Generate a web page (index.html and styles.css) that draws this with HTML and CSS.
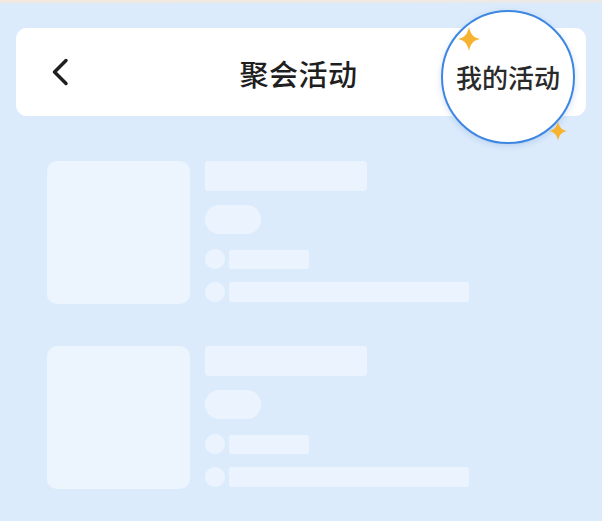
FILE: index.html
```html
<!DOCTYPE html>
<html lang="zh">
<head>
<meta charset="utf-8">
<link rel="stylesheet" href="styles.css">
</head>
<body>
<div class="page">
  <div class="topline"></div>
  <header class="navbar">
    <div class="back">
      <svg width="18" height="28" viewBox="0 0 18 28"><path d="M15 2.5 L3.5 14 L15 25.5" fill="none" stroke="#1f1f1f" stroke-width="3.5" stroke-linecap="round" stroke-linejoin="round"/></svg>
    </div>
    <h1 class="title">聚会活动</h1>
    <div class="spacer"></div>
  </header>
  <div class="mine">
    <span class="mine-text">我的活动</span>
    <svg class="spark spark-a" width="22" height="24" viewBox="0 0 22 24"><path d="M11 0 C12.5 7 15 10.5 22 12 C15 13.5 12.5 17 11 24 C9.5 17 7 13.5 0 12 C7 10.5 9.5 7 11 0 Z" fill="#f7b230"/></svg>
    <svg class="spark spark-b" width="18" height="20" viewBox="0 0 22 24"><path d="M11 0 C12.5 7 15 10.5 22 12 C15 13.5 12.5 17 11 24 C9.5 17 7 13.5 0 12 C7 10.5 9.5 7 11 0 Z" fill="#f7b230"/></svg>
  </div>
  <main class="list">
    <div class="item">
      <div class="thumb"></div>
      <div class="info">
        <div class="sk sk-title"></div>
        <div class="sk sk-pill"></div>
        <div class="row"><div class="sk sk-dot"></div><div class="sk sk-short"></div></div>
        <div class="row"><div class="sk sk-dot"></div><div class="sk sk-long"></div></div>
      </div>
    </div>
    <div class="item">
      <div class="thumb"></div>
      <div class="info">
        <div class="sk sk-title"></div>
        <div class="sk sk-pill"></div>
        <div class="row"><div class="sk sk-dot"></div><div class="sk sk-short"></div></div>
        <div class="row"><div class="sk sk-dot"></div><div class="sk sk-long"></div></div>
      </div>
    </div>
  </main>
</div>
</body>
</html>
```
FILE: styles.css
```css
* { box-sizing: border-box; margin: 0; padding: 0; }
html, body { width: 602px; height: 521px; overflow: hidden; }
body {
  background: #dcebfc;
  font-family: "Noto Sans CJK SC", "Noto Sans", sans-serif;
}
.page {
  position: relative;
  width: 602px;
  height: 521px;
  background: #dcebfc;
  display: flex;
  flex-direction: column;
}
.topline {
  height: 3px;
  background: linear-gradient(90deg, #f1e9df, #efe9e3 60%, #e9e9ea);
  margin-bottom: 25px;
}
.navbar {
  margin: 0 16px;
  height: 88px;
  background: #ffffff;
  border-radius: 11px;
  display: flex;
  align-items: center;
  padding: 0 0 0 35px;
}
.back {
  width: 60px;
  display: flex;
  align-items: center;
  height: 28px;
}
.title {
  flex: 1;
  text-align: center;
  font-size: 29px;
  font-weight: 500;
  color: #1f1f1f;
  letter-spacing: 0.5px;
  padding-right: 60px;
  margin-left: -4px;
  margin-top: 2px;
}
.spacer { width: 36px; }
.mine {
  position: absolute;
  left: 441px;
  top: 10px;
  width: 134px;
  height: 134px;
  border-radius: 50%;
  background: #ffffff;
  border: 2px solid #3d87e2;
  box-shadow: 0 2px 6px rgba(80, 130, 200, 0.25);
  display: flex;
  align-items: center;
  justify-content: center;
}
.mine-text {
  font-size: 26px;
  font-weight: 500;
  color: #2a2a2a;
  margin-top: -2px;
}
.spark { position: absolute; }
.spark-a { left: 15px; top: 15px; }
.spark-b { left: 106px; top: 109px; }
.list {
  display: flex;
  flex-direction: column;
  gap: 42px;
  padding: 45px 0 0 47px;
}
.item {
  display: flex;
  gap: 15px;
}
.thumb {
  width: 143px;
  height: 143px;
  border-radius: 10px;
  background: #ecf5fe;
}
.info {
  display: flex;
  flex-direction: column;
  align-items: flex-start;
}
.sk { background: #ebf4fe; }
.sk-title { width: 162px; height: 30px; border-radius: 4px; }
.sk-pill { width: 56px; height: 29px; border-radius: 15px; margin-top: 14px; }
.row { display: flex; align-items: center; gap: 4px; margin-top: 15px; }
.row + .row { margin-top: 13px; }
.sk-dot { width: 20px; height: 20px; border-radius: 50%; }
.sk-short { width: 80px; height: 19px; border-radius: 3px; }
.sk-long { width: 240px; height: 20px; border-radius: 3px; }
```
